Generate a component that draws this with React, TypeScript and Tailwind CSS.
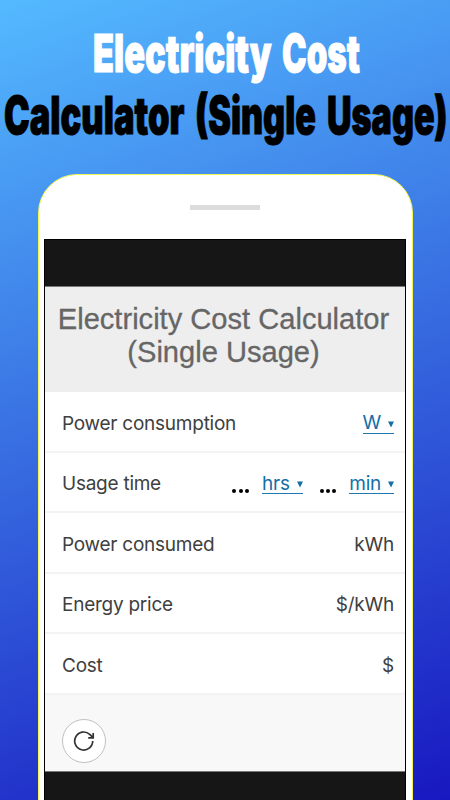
import type { ReactNode } from "react";

function Word({ box, scale, children }: { box: string; scale: string; children: string }) {
  return (
    <span className={`block h-[62px] whitespace-nowrap ${box}`}>
      <span className={`inline-block origin-left ${scale}`}>{children}</span>
    </span>
  );
}

function Row({ label, children }: { label: string; children: ReactNode }) {
  return (
    <div className="flex h-[60.6px] items-center justify-between border-b-2 border-[#f3f3f3] pt-[5px] pr-[11px] pl-[17px] text-[#404040]">
      <span>{label}</span>
      <div className="flex items-center">{children}</div>
    </div>
  );
}

function Unit({ children }: { children: string }) {
  return (
    <span className="flex h-[20px] items-center border-b border-[#2079ae] text-[#146fa8]">
      {children}
      <svg className="mt-[2px] ml-[7px]" width="6" height="7" viewBox="0 0 6 7">
        <path d="M0 0.5h6L3 6.5z" fill="currentColor" />
      </svg>
    </span>
  );
}

function Dots() {
  return (
    <span className="mt-[14px] flex gap-[2.3px]">
      <i className="size-[4px] rounded-full bg-black" />
      <i className="size-[4px] rounded-full bg-black" />
      <i className="size-[4px] rounded-full bg-black" />
    </span>
  );
}

export default function App() {
  return (
    <main className="h-[800px] w-[450px] overflow-hidden bg-[linear-gradient(160deg,#54baff_0%,#1818c0_100%)] pt-[22px] font-['Inter',sans-serif]">
      <h1 className="h-[152px] font-['Inter',sans-serif] text-[52px] leading-[64px] font-black [-webkit-text-stroke:1px_currentColor]">
        <span className="flex pl-[92.5px] text-white">
          <Word box="w-[189px]" scale="scale-x-[0.66]">Electricity</Word>
          <Word box="w-[80px]" scale="scale-x-[0.635]">Cost</Word>
        </span>
        <span className="flex pl-[4px] text-black">
          <Word box="w-[191px]" scale="scale-x-[0.663]">Calculator</Word>
          <Word box="w-[132px]" scale="scale-x-[0.655]">(Single</Word>
          <Word box="w-[123px]" scale="scale-x-[0.655]">Usage)</Word>
        </span>
      </h1>
      <section className="ml-[37.5px] h-[680px] w-[375px] rounded-t-[39px] border-[1.5px] border-[#f5f552] bg-white pt-[30px]">
        <div className="mx-auto h-[5px] w-[70px] bg-[#dcdcdc]" />
        <div className="mt-[29px] ml-[5.5px] h-[620px] w-[362px] border border-black bg-[#161616] pt-[46px]">
          <div className="h-[486px] border-y border-[#777] bg-[#f8f8f8]">
            <header className="h-[105px] bg-[#eeeeee] pt-[16px] pr-[3px] text-center font-['Liberation_Sans',sans-serif] text-[29.1px] leading-[33px] text-[#666] [-webkit-text-stroke:0.3px_#666]">
              Electricity Cost Calculator
              <br />
              (Single Usage)
            </header>
            <div className="rounded-br-lg bg-white text-[19px] tracking-[-0.25px]">
              <Row label="Power consumption"><Unit>W</Unit></Row>
              <Row label="Usage time">
                <Dots />
                <span className="ml-[13px]"><Unit>hrs</Unit></span>
                <span className="ml-[17px]"><Dots /></span>
                <span className="ml-[13px]"><Unit>min</Unit></span>
              </Row>
              <Row label="Power consumed">kWh</Row>
              <Row label="Energy price">$/kWh</Row>
              <Row label="Cost">$</Row>
            </div>
            <div className="mt-[24px] ml-[17px] flex size-[44px] items-center justify-center rounded-full border border-[#bfc2c2] bg-white">
              <svg width="22" height="22" viewBox="0 0 22 22" fill="none" stroke="#333" strokeWidth="1.7">
                <path d="M19.7 11a9 9 0 1 1-3-6.7L19.8 7.4M20.2 3v4.8h-5" />
              </svg>
            </div>
          </div>
        </div>
      </section>
    </main>
  );
}
